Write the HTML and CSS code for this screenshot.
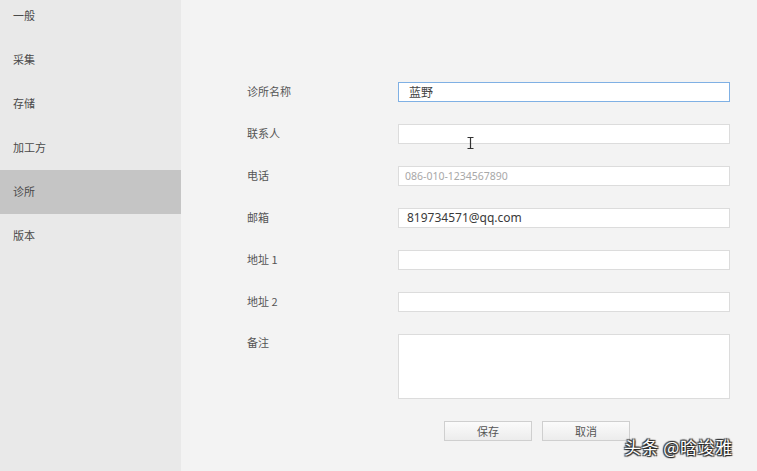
FILE: index.html
```html
<!DOCTYPE html>
<html lang="zh">
<head>
<meta charset="utf-8">
<link rel="stylesheet" href="styles.css">
</head>
<body>
<div class="app">
  <nav class="sidebar">
    <div class="nav-item">一般</div>
    <div class="nav-item">采集</div>
    <div class="nav-item">存储</div>
    <div class="nav-item">加工方</div>
    <div class="nav-item active">诊所</div>
    <div class="nav-item">版本</div>
  </nav>
  <main class="main">
    <form class="form">
      <label class="label">诊所名称</label>
      <div class="field focused">蓝野</div>
      <label class="label">联系人</label>
      <div class="field"></div>
      <label class="label">电话</label>
      <div class="field placeholder">086-010-1234567890</div>
      <label class="label">邮箱</label>
      <div class="field email">819734571@qq.com</div>
      <label class="label">地址 1</label>
      <div class="field"></div>
      <label class="label">地址 2</label>
      <div class="field"></div>
      <label class="label label-top">备注</label>
      <div class="field area"></div>
      <div class="spacer"></div>
      <div class="buttons">
        <div class="btn">保存</div>
        <div class="btn">取消</div>
      </div>
    </form>
    <svg class="cursor" width="7" height="12" viewBox="0 0 7 12"><path d="M0.5 0.5h6M3.5 0.5v11M0.5 11.5h6" stroke="#333" stroke-width="1.2" fill="none"/></svg>
    <div class="watermark">头条 @晗竣雅</div>
  </main>
</div>
</body>
</html>
```
FILE: styles.css
```css
* { box-sizing: border-box; }
html, body { margin: 0; padding: 0; }
body {
  width: 757px;
  height: 471px;
  overflow: hidden;
  font-family: "Noto Sans CJK SC", "Noto Sans", sans-serif;
  background: #f3f3f3;
}
.app {
  display: flex;
  height: 471px;
}
.sidebar {
  width: 181px;
  flex: none;
  background: #e9e9e9;
}
.nav-item {
  height: 44px;
  display: flex;
  align-items: center;
  padding-left: 13px;
  padding-bottom: 2px;
  font-size: 11px;
  color: #4a4a4a;
}
.nav-item:first-child { margin-top: -6px; }
.nav-item.active { background: #c5c5c5; }
.main {
  flex: 1;
  position: relative;
  background: #f3f3f3;
}
.form {
  display: grid;
  grid-template-columns: 151px 332px;
  row-gap: 22px;
  padding: 82px 0 0 66px;
  align-items: center;
}
.label {
  font-size: 11px;
  color: #555;
  line-height: 20px;
  margin-top: -3px;
}
.label-top { align-self: start; line-height: 16px; margin-top: 0; padding-top: 0; }
.field {
  height: 20px;
  background: #fff;
  border: 1px solid #dcdcdc;
  font-size: 12px;
  color: #333;
  line-height: 18px;
  padding-left: 6px;
}
.field.focused {
  border-color: #7fb0e4;
  padding-left: 10px;
  color: #444;
}
.field.placeholder {
  color: #a8a8a8;
  font-size: 10.5px;
  font-family: "Noto Sans", sans-serif;
}
.field.email {
  font-family: "Noto Sans", sans-serif;
  padding-left: 8px;
  color: #3a3a3a;
}
.field.area { height: 65px; }
.buttons {
  display: flex;
  gap: 10px;
  margin: 0 0 0 46px;
}
.btn {
  width: 88px;
  height: 20px;
  border: 1px solid #cfcfcf;
  background: linear-gradient(#fbfbfb, #ececec);
  font-size: 11px;
  color: #555;
  display: flex;
  align-items: center;
  justify-content: center;
}
.cursor {
  position: absolute;
  left: 286px;
  top: 137px;
}
.watermark {
  position: absolute;
  left: 443px;
  top: 434px;
  font-size: 17px;
  color: #fff;
  letter-spacing: 0.5px;
  text-shadow: 0 0 1px #222, 1px 1px 1px #222, -1px -1px 1px #333, 1px -1px 1px #333, -1px 1px 1px #333;
}
```
